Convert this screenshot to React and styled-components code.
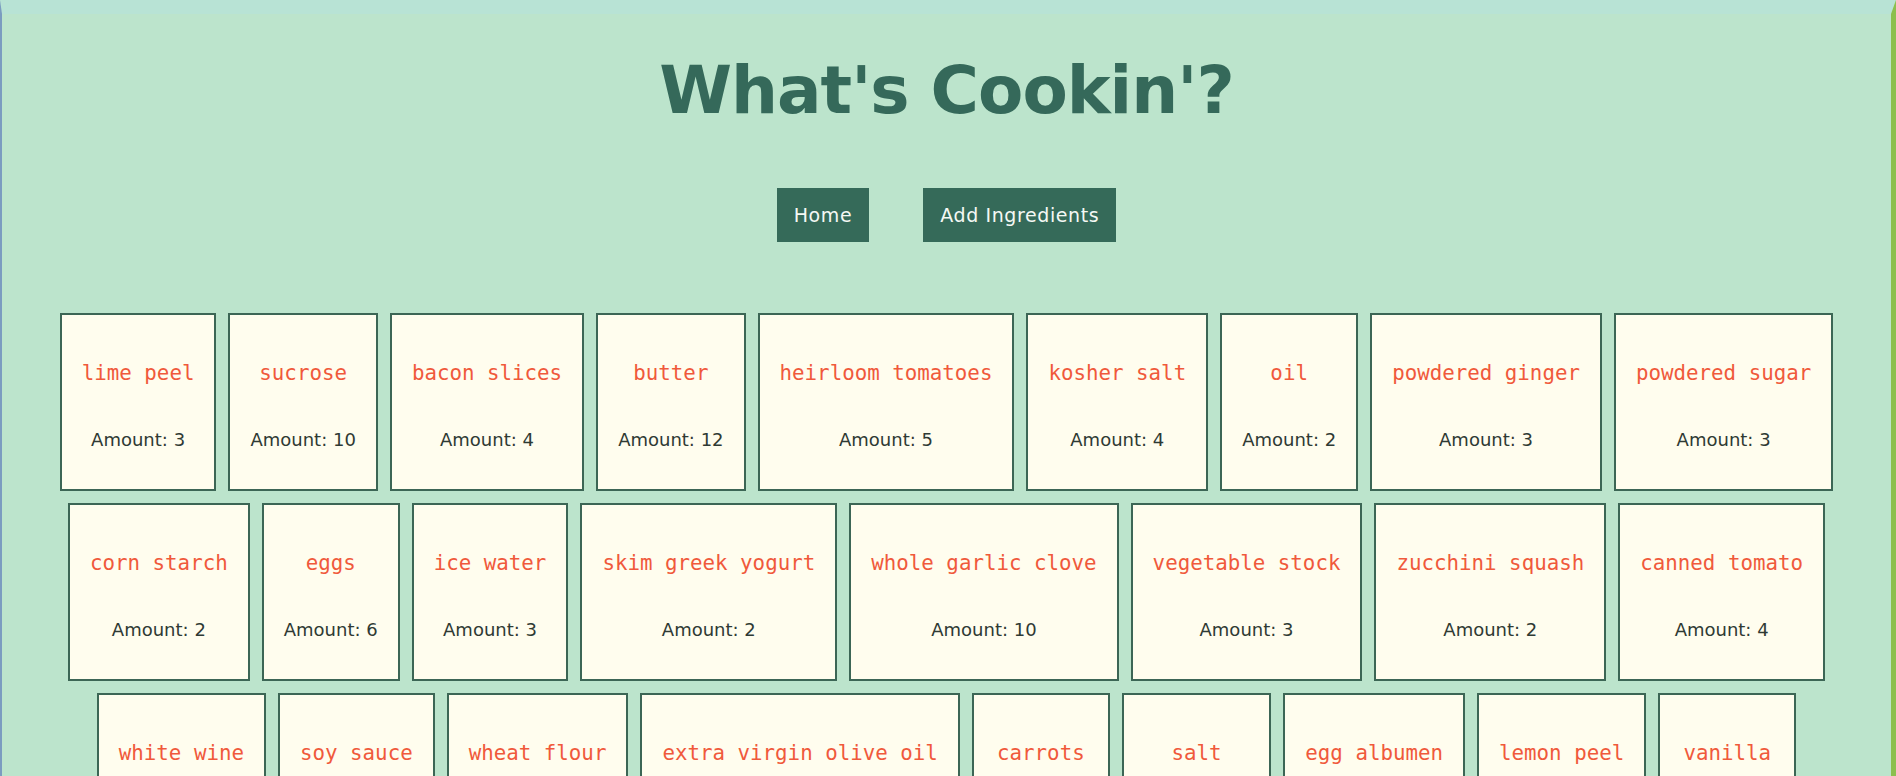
import styled, { createGlobalStyle } from "styled-components";

const GlobalStyle = createGlobalStyle`
  html, body {
    margin: 0;
    padding: 0;
  }
  body {
    font-family: "DejaVu Sans", "Liberation Sans", sans-serif;
    background-color: #bce4cc;
  }
`;

const Page = styled.div`
  min-height: 100vh;
  box-sizing: border-box;
  background-color: #bce4cc;
  border-top: 14px solid #b8e3d5;
  border-left: 2px solid #7b9cc0;
  border-right: 5px solid #8cbf4e;
  display: flex;
  flex-direction: column;
  align-items: center;
`;

const Title = styled.h1`
  margin: 42px 0 0;
  font-family: "DejaVu Sans", sans-serif;
  font-size: 66px;
  line-height: 70px;
  font-weight: 700;
  letter-spacing: -1px;
  color: #35695a;
`;

const Nav = styled.nav`
  display: flex;
  justify-content: center;
  gap: 54px;
  margin-top: 62px;
`;

const NavButton = styled.button`
  height: 54px;
  padding: 0 17px;
  border: none;
  border-radius: 0;
  background-color: #356a59;
  color: #f4f8f4;
  font-family: "DejaVu Sans", sans-serif;
  font-size: 19px;
  letter-spacing: 0.6px;
  cursor: pointer;

  &:hover {
    background-color: #2b5a4b;
  }
`;

const CardGrid = styled.section`
  display: flex;
  flex-wrap: wrap;
  justify-content: center;
  gap: 12px;
  width: 100%;
  margin-top: 71px;
`;

const Card = styled.div`
  display: flex;
  flex-direction: column;
  align-items: center;
  padding: 20px;
  background-color: #fffdee;
  border: 2px solid #3c6655;
`;

const Name = styled.h3`
  margin: 26px 0 0;
  font-family: "DejaVu Sans Mono", "Liberation Mono", monospace;
  font-size: 20.8px;
  line-height: 24px;
  font-weight: 400;
  color: #f0593b;
  white-space: nowrap;
`;

const Amount = styled.p`
  margin: 44px 0 18px;
  font-family: "DejaVu Sans", sans-serif;
  font-size: 18px;
  line-height: 22px;
  color: #2f3a34;
  white-space: nowrap;
`;

const ingredients = [
  { name: "lime peel", amount: 3 },
  { name: "sucrose", amount: 10 },
  { name: "bacon slices", amount: 4 },
  { name: "butter", amount: 12 },
  { name: "heirloom tomatoes", amount: 5 },
  { name: "kosher salt", amount: 4 },
  { name: "oil", amount: 2 },
  { name: "powdered ginger", amount: 3 },
  { name: "powdered sugar", amount: 3 },
  { name: "corn starch", amount: 2 },
  { name: "eggs", amount: 6 },
  { name: "ice water", amount: 3 },
  { name: "skim greek yogurt", amount: 2 },
  { name: "whole garlic clove", amount: 10 },
  { name: "vegetable stock", amount: 3 },
  { name: "zucchini squash", amount: 2 },
  { name: "canned tomato", amount: 4 },
  { name: "white wine", amount: 1 },
  { name: "soy sauce", amount: 2 },
  { name: "wheat flour", amount: 3 },
  { name: "extra virgin olive oil", amount: 4 },
  { name: "carrots", amount: 3 },
  { name: "salt", amount: 10 },
  { name: "egg albumen", amount: 2 },
  { name: "lemon peel", amount: 1 },
  { name: "vanilla", amount: 1 },
];

function App() {
  return (
    <>
      <GlobalStyle />
      <Page>
        <Title>What's Cookin'?</Title>
        <Nav>
          <NavButton>Home</NavButton>
          <NavButton>Add Ingredients</NavButton>
        </Nav>
        <CardGrid>
          {ingredients.map((item) => (
            <Card key={item.name}>
              <Name>{item.name}</Name>
              <Amount>Amount: {item.amount}</Amount>
            </Card>
          ))}
        </CardGrid>
      </Page>
    </>
  );
}

export default App;
